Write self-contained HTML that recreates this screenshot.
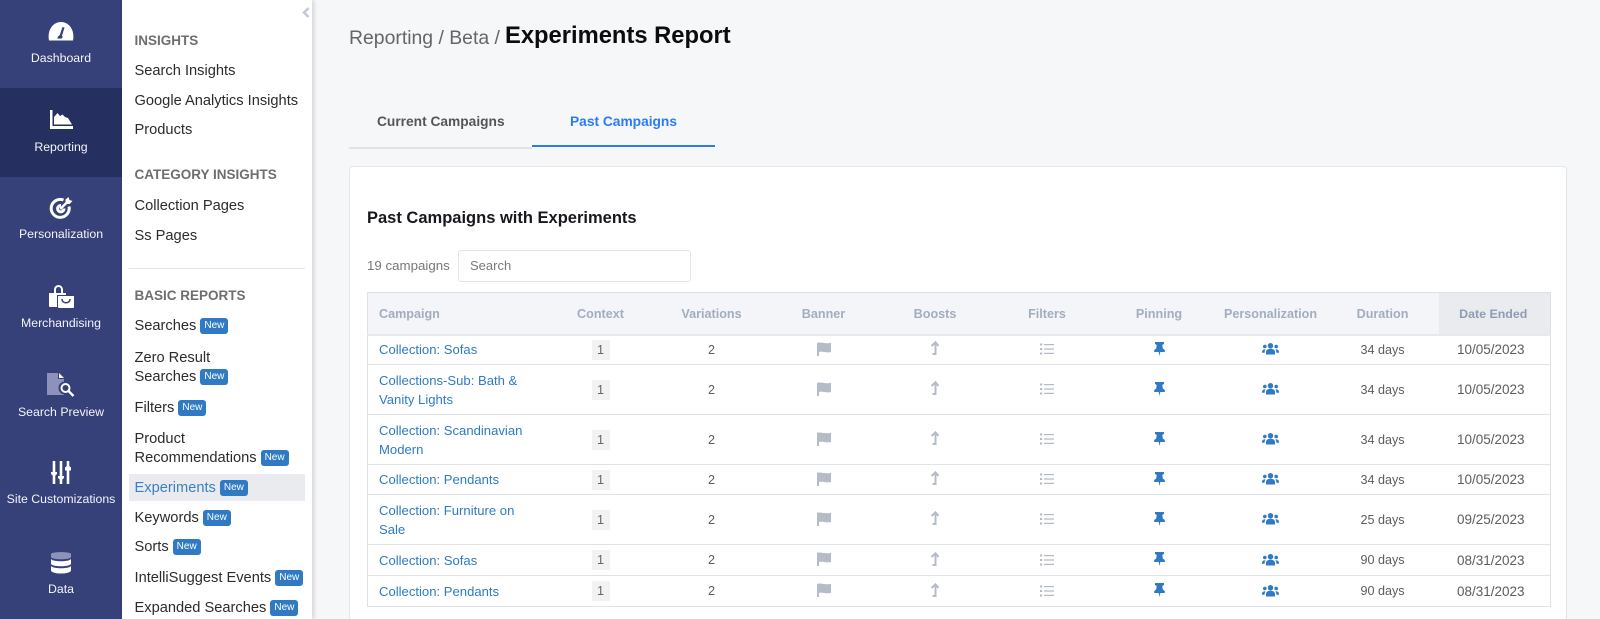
<!DOCTYPE html>
<html lang="en"><head><meta charset="utf-8"><title>Experiments Report</title>
<style>
*{box-sizing:border-box}
html,body{margin:0;padding:0;width:1600px;height:619px;overflow:hidden;background:#f6f7f9;font-family:"Liberation Sans",sans-serif;color:#222}
#wrap{position:relative;width:1600px;height:619px;overflow:hidden;background:#f6f7f9}
.a{position:absolute;white-space:nowrap}
#rail{position:absolute;left:0;top:0;width:122px;height:619px;background:#364079}
#act{position:absolute;left:0;top:88px;width:122px;height:89px;background:#252f60}
.lab{position:absolute;left:0;width:122px;text-align:center;color:#f4f5fa;font-size:12.3px;line-height:16px;white-space:nowrap}
#panel{position:absolute;left:122px;top:0;width:190px;height:619px;background:#fff;box-shadow:2px 0 4px rgba(0,0,0,.14)}
.h{position:absolute;left:134.5px;color:#6e6e6e;font-weight:bold;font-size:13.5px;line-height:16px;white-space:nowrap}
.n{position:absolute;left:134.5px;color:#2b2b2b;font-size:14.65px;line-height:18px;white-space:nowrap}
.b{display:inline-block;background:#2f7ac2;color:#fff;font-size:10px;line-height:15px;height:16px;padding:0 4px;border-radius:3px;margin-left:4px;vertical-align:2px;font-weight:normal}
#card{position:absolute;left:349px;top:166px;width:1218px;height:470px;background:#fff;border:1px solid #e5e6ea;border-radius:4px}
table{position:absolute;left:367px;top:292px;width:1183px;border-collapse:collapse;table-layout:fixed;font-size:12.6px;color:#5c5c5c}
td,th{padding:0;text-align:center;border-bottom:1px solid #e2e3e8;vertical-align:middle}
table{border-left:1px solid #dfe0e5;border-right:1px solid #dfe0e5;border-top:1px solid #dfe0e5}
th{background:#f3f5f9;color:#a3adbd;font-size:12.6px;font-weight:bold;height:42px;border-bottom:2px solid #e8e9ee;padding-top:1px}
th.s{background:#e9ebef;color:#8f9db3;font-size:12.4px;padding-right:2px}
th:first-child,td:first-child{text-align:left;padding-left:11px}
td:first-child{color:#2e7bc4;line-height:19px;font-size:13.1px}
td:last-child{font-size:13.5px;padding-right:7px}
.r1{height:30px}.r2{height:50px}.r3{height:31px}
.c{display:inline-block;width:18px;height:20px;line-height:20px;background:#f2f2f3;color:#666}
svg{display:inline-block;vertical-align:middle}
td svg{position:relative;top:-1px}
</style></head><body>
<div id="wrap">
<svg width="0" height="0" style="position:absolute">
<symbol id="flag" viewBox="0 0 14 14"><path fill="#b5bbc7" d="M0 .8c4-1.300 8 1.500 14 0v9.200c-5 1.300-9-1.300-12 0V14H0z"/></symbol>
<symbol id="up" viewBox="0 0 10 15"><path fill="none" stroke="#b5bbc7" stroke-width="2" d="M1.500 5L5.500 1.300 8.500 5M5.500 1.500V13H2.500"/></symbol>
<symbol id="list" viewBox="0 0 14 12"><path fill="#b5bbc7" d="M0 0.500h2.200v2H0zM0 5h2.200v2H0zM0 9.500h2.200v2H0zM4 1h10v1.200H4zM4 5.400h10v1.200H4zM4 9.800h10v1.200H4z"/></symbol>
<symbol id="pin" viewBox="0 0 11 14"><path fill="#2f7ac2" d="M1 0h9v2L8.300 3l.5 3.500 2 1.500v2H6.300L5.500 14l-.8-4H.2V8l2-1.500L2.700 3 1 2z"/></symbol>
<symbol id="ppl" viewBox="0 0 17 12"><g fill="#2f7ac2"><circle cx="8.500" cy="2.700" r="2.700"/><circle cx="2.800" cy="3.500" r="1.800"/><circle cx="14.200" cy="3.500" r="1.800"/><path d="M4 11.500V9c0-2 2-3.200 4.500-3.200S13 7 13 9v2.500zM0 9c0-2 1.500-3 3.800-2.600-.8.700-1.200 1.500-1.200 3.300H0zM17 9c0-2-1.500-3-3.800-2.600.8.700 1.200 1.500 1.200 3.300H17z"/></g></symbol>
</svg>

<div id="rail"><div id="act"></div>
<svg class="a" style="left:48px;top:21px" width="26" height="20" viewBox="0 0 26 20"><path fill="#fff" d="M1 19.500C-1 9 5 1 13 1s14 8 12 18.500z"/><path fill="#364079" d="M14.500 6l2 .6-2.500 8c1 1.200.5 3-1.500 3H9.500c0-1.500.8-2.800 2.200-3.300z"/></svg>
<div class="lab" style="top:50px">Dashboard</div>
<svg class="a" style="left:50px;top:110px" width="23" height="19" viewBox="0 0 23 19"><path fill="#fff" d="M0 0h2.500v16H23v3H0z"/><path fill="#fff" d="M4 14.500V7l3.500-4L10 6l2.500-1.500L15 7l3 1 4 6.500z"/></svg>
<div class="lab" style="top:139px">Reporting</div>
<svg class="a" style="left:49px;top:197px" width="24" height="23" viewBox="0 0 24 23"><g fill="none" stroke="#fff" stroke-width="3"><path d="M14.500 3A9 9 0 1 0 20 9.500"/><path d="M12 8.500A3.200 3.200 0 1 0 15 11.500"/></g><path fill="#fff" d="M10.500 11l6-6V2.500l3-2.500 1 3 3 1-3 3h-2.500l-6 6z"/></svg>
<div class="lab" style="top:226px">Personalization</div>
<svg class="a" style="left:48px;top:285px" width="26" height="23" viewBox="0 0 26 23"><path fill="#fff" d="M1 8h17v2H9v12H2a1 1 0 0 1-1-1z"/><path fill="none" stroke="#fff" stroke-width="2" d="M7 9V4.500a3.500 3.500 0 0 1 7 0V9"/><path fill="#fff" d="M10 11h16v11a1 1 0 0 1-1 1H11a1 1 0 0 1-1-1z"/><path fill="none" stroke="#364079" stroke-width="1.500" d="M14 14c0 5 8 5 8 0"/></svg>
<div class="lab" style="top:315px">Merchandising</div>
<svg class="a" style="left:47px;top:373px" width="28" height="24" viewBox="0 0 28 24"><path fill="#8c92ba" d="M0 0h11v6h6v16H0z"/><path fill="#fff" d="M12 0l5 5h-5z"/><circle cx="18" cy="15" r="6.500" fill="#364079"/><circle cx="18.500" cy="15" r="4" fill="none" stroke="#fff" stroke-width="2"/><path stroke="#fff" stroke-width="2.400" d="M21.500 18l5 5"/></svg>
<div class="lab" style="top:404px">Search Preview</div>
<svg class="a" style="left:51px;top:461px" width="20" height="23" viewBox="0 0 20 23"><g fill="#fff"><path d="M1.700 0h2.600v23H1.700zM8.700 0h2.600v23H8.700zM15.700 0h2.600v23h-2.600z"/><path d="M0 11h6v2l-3 2.500L0 13zM7 15h6v2l-3 2.500L7 17zM14 6.500l3-2.500 3 2.500v3h-6z"/></g></svg>
<div class="lab" style="top:491px">Site Customizations</div>
<svg class="a" style="left:51px;top:551px" width="20" height="23" viewBox="0 0 20 23"><path fill="#8c92ba" d="M0 3C0 .5 20 .5 20 3v3C20 9 0 9 0 6z"/><path fill="#fff" d="M0 8c2 3 18 3 20 0v5c-2 3-18 3-20 0zM0 15c2 3 18 3 20 0v4.500c-1 4-19 4-20 0z"/></svg>
<div class="lab" style="top:581px">Data</div>
</div>

<div id="panel"></div>
<svg class="a" style="left:302px;top:7px" width="8" height="11" viewBox="0 0 8 11"><path fill="none" stroke="#c3c9d6" stroke-width="2.600" d="M6.500 1L2 5.500l4.500 4.500"/></svg>
<div class="h" style="top:33px">INSIGHTS</div>
<div class="n" style="top:62px">Search Insights</div>
<div class="n" style="top:92px">Google Analytics Insights</div>
<div class="n" style="top:121px">Products</div>
<div class="h" style="top:167px">CATEGORY INSIGHTS</div>
<div class="n" style="top:196.500px">Collection Pages</div>
<div class="n" style="top:226.500px">Ss Pages</div>
<div class="a" style="left:129px;top:268px;width:176px;height:1px;background:#e3e4e8"></div>
<div class="h" style="top:288px">BASIC REPORTS</div>
<div class="n" style="top:317px">Searches<span class="b">New</span></div>
<div class="n" style="top:349px">Zero Result</div>
<div class="n" style="top:368px">Searches<span class="b">New</span></div>
<div class="n" style="top:399px">Filters<span class="b">New</span></div>
<div class="n" style="top:430px">Product</div>
<div class="n" style="top:449px">Recommendations<span class="b">New</span></div>
<div class="a" style="left:129px;top:474px;width:176px;height:27px;background:#e9ebef"></div>
<div class="n" style="top:479px;color:#3a80c4">Experiments<span class="b">New</span></div>
<div class="n" style="top:509px">Keywords<span class="b">New</span></div>
<div class="n" style="top:538px">Sorts<span class="b">New</span></div>
<div class="n" style="top:568.500px">IntelliSuggest Events<span class="b">New</span></div>
<div class="n" style="top:599px">Expanded Searches<span class="b">New</span></div>

<div class="a" style="left:349px;top:25.500px;font-size:19.400px;line-height:24px;color:#666">Reporting / Beta /</div>
<div class="a" style="left:505px;top:22px;font-size:23.750px;line-height:28px;font-weight:bold;color:#0c0c0c">Experiments Report</div>
<div class="a" style="left:349px;top:147px;width:183px;height:2px;background:#e2e2e4"></div>
<div class="a" style="left:532px;top:145px;width:183px;height:2px;background:#2b7bf5"></div>
<div class="a" style="left:377px;top:112.500px;font-size:13.750px;line-height:17px;font-weight:bold;color:#555">Current Campaigns</div>
<div class="a" style="left:570px;top:112.500px;font-size:13.750px;line-height:17px;font-weight:bold;color:#2b7bf5">Past Campaigns</div>

<div id="card"></div>
<div class="a" style="left:367px;top:208px;font-size:16.500px;line-height:20px;font-weight:bold;color:#16181d">Past Campaigns with Experiments</div>
<div class="a" style="left:367px;top:258px;font-size:13.300px;line-height:16px;color:#777">19 campaigns</div>
<div class="a" style="left:458px;top:250px;width:233px;height:32px;background:#fff;border:1px solid #e3e4e8;border-radius:3px;padding-left:11px;font-size:13px;line-height:30px;color:#7a7a7a">Search</div>

<table>
<colgroup><col style="width:178px"><col style="width:110px"><col style="width:112px"><col style="width:112px"><col style="width:111px"><col style="width:113px"><col style="width:111px"><col style="width:112px"><col style="width:112px"><col style="width:112px"></colgroup>
<tr><th>Campaign</th><th>Context</th><th>Variations</th><th>Banner</th><th>Boosts</th><th>Filters</th><th>Pinning</th><th>Personalization</th><th>Duration</th><th class="s">Date Ended</th></tr>
<tr class="r1"><td>Collection: Sofas</td><td><span class="c">1</span></td><td>2</td><td><svg width="14" height="14"><use href="#flag"/></svg></td><td><svg width="10" height="15"><use href="#up"/></svg></td><td><svg width="14" height="12"><use href="#list"/></svg></td><td><svg width="11" height="14"><use href="#pin"/></svg></td><td><svg width="17" height="12"><use href="#ppl"/></svg></td><td>34 days</td><td>10/05/2023</td></tr>
<tr class="r2"><td>Collections-Sub: Bath &amp;<br>Vanity Lights</td><td><span class="c">1</span></td><td>2</td><td><svg width="14" height="14"><use href="#flag"/></svg></td><td><svg width="10" height="15"><use href="#up"/></svg></td><td><svg width="14" height="12"><use href="#list"/></svg></td><td><svg width="11" height="14"><use href="#pin"/></svg></td><td><svg width="17" height="12"><use href="#ppl"/></svg></td><td>34 days</td><td>10/05/2023</td></tr>
<tr class="r2"><td>Collection: Scandinavian<br>Modern</td><td><span class="c">1</span></td><td>2</td><td><svg width="14" height="14"><use href="#flag"/></svg></td><td><svg width="10" height="15"><use href="#up"/></svg></td><td><svg width="14" height="12"><use href="#list"/></svg></td><td><svg width="11" height="14"><use href="#pin"/></svg></td><td><svg width="17" height="12"><use href="#ppl"/></svg></td><td>34 days</td><td>10/05/2023</td></tr>
<tr class="r1"><td>Collection: Pendants</td><td><span class="c">1</span></td><td>2</td><td><svg width="14" height="14"><use href="#flag"/></svg></td><td><svg width="10" height="15"><use href="#up"/></svg></td><td><svg width="14" height="12"><use href="#list"/></svg></td><td><svg width="11" height="14"><use href="#pin"/></svg></td><td><svg width="17" height="12"><use href="#ppl"/></svg></td><td>34 days</td><td>10/05/2023</td></tr>
<tr class="r2"><td>Collection: Furniture on<br>Sale</td><td><span class="c">1</span></td><td>2</td><td><svg width="14" height="14"><use href="#flag"/></svg></td><td><svg width="10" height="15"><use href="#up"/></svg></td><td><svg width="14" height="12"><use href="#list"/></svg></td><td><svg width="11" height="14"><use href="#pin"/></svg></td><td><svg width="17" height="12"><use href="#ppl"/></svg></td><td>25 days</td><td>09/25/2023</td></tr>
<tr class="r3"><td>Collection: Sofas</td><td><span class="c">1</span></td><td>2</td><td><svg width="14" height="14"><use href="#flag"/></svg></td><td><svg width="10" height="15"><use href="#up"/></svg></td><td><svg width="14" height="12"><use href="#list"/></svg></td><td><svg width="11" height="14"><use href="#pin"/></svg></td><td><svg width="17" height="12"><use href="#ppl"/></svg></td><td>90 days</td><td>08/31/2023</td></tr>
<tr class="r3"><td>Collection: Pendants</td><td><span class="c">1</span></td><td>2</td><td><svg width="14" height="14"><use href="#flag"/></svg></td><td><svg width="10" height="15"><use href="#up"/></svg></td><td><svg width="14" height="12"><use href="#list"/></svg></td><td><svg width="11" height="14"><use href="#pin"/></svg></td><td><svg width="17" height="12"><use href="#ppl"/></svg></td><td>90 days</td><td>08/31/2023</td></tr>
</table>
</div>
</body></html>
